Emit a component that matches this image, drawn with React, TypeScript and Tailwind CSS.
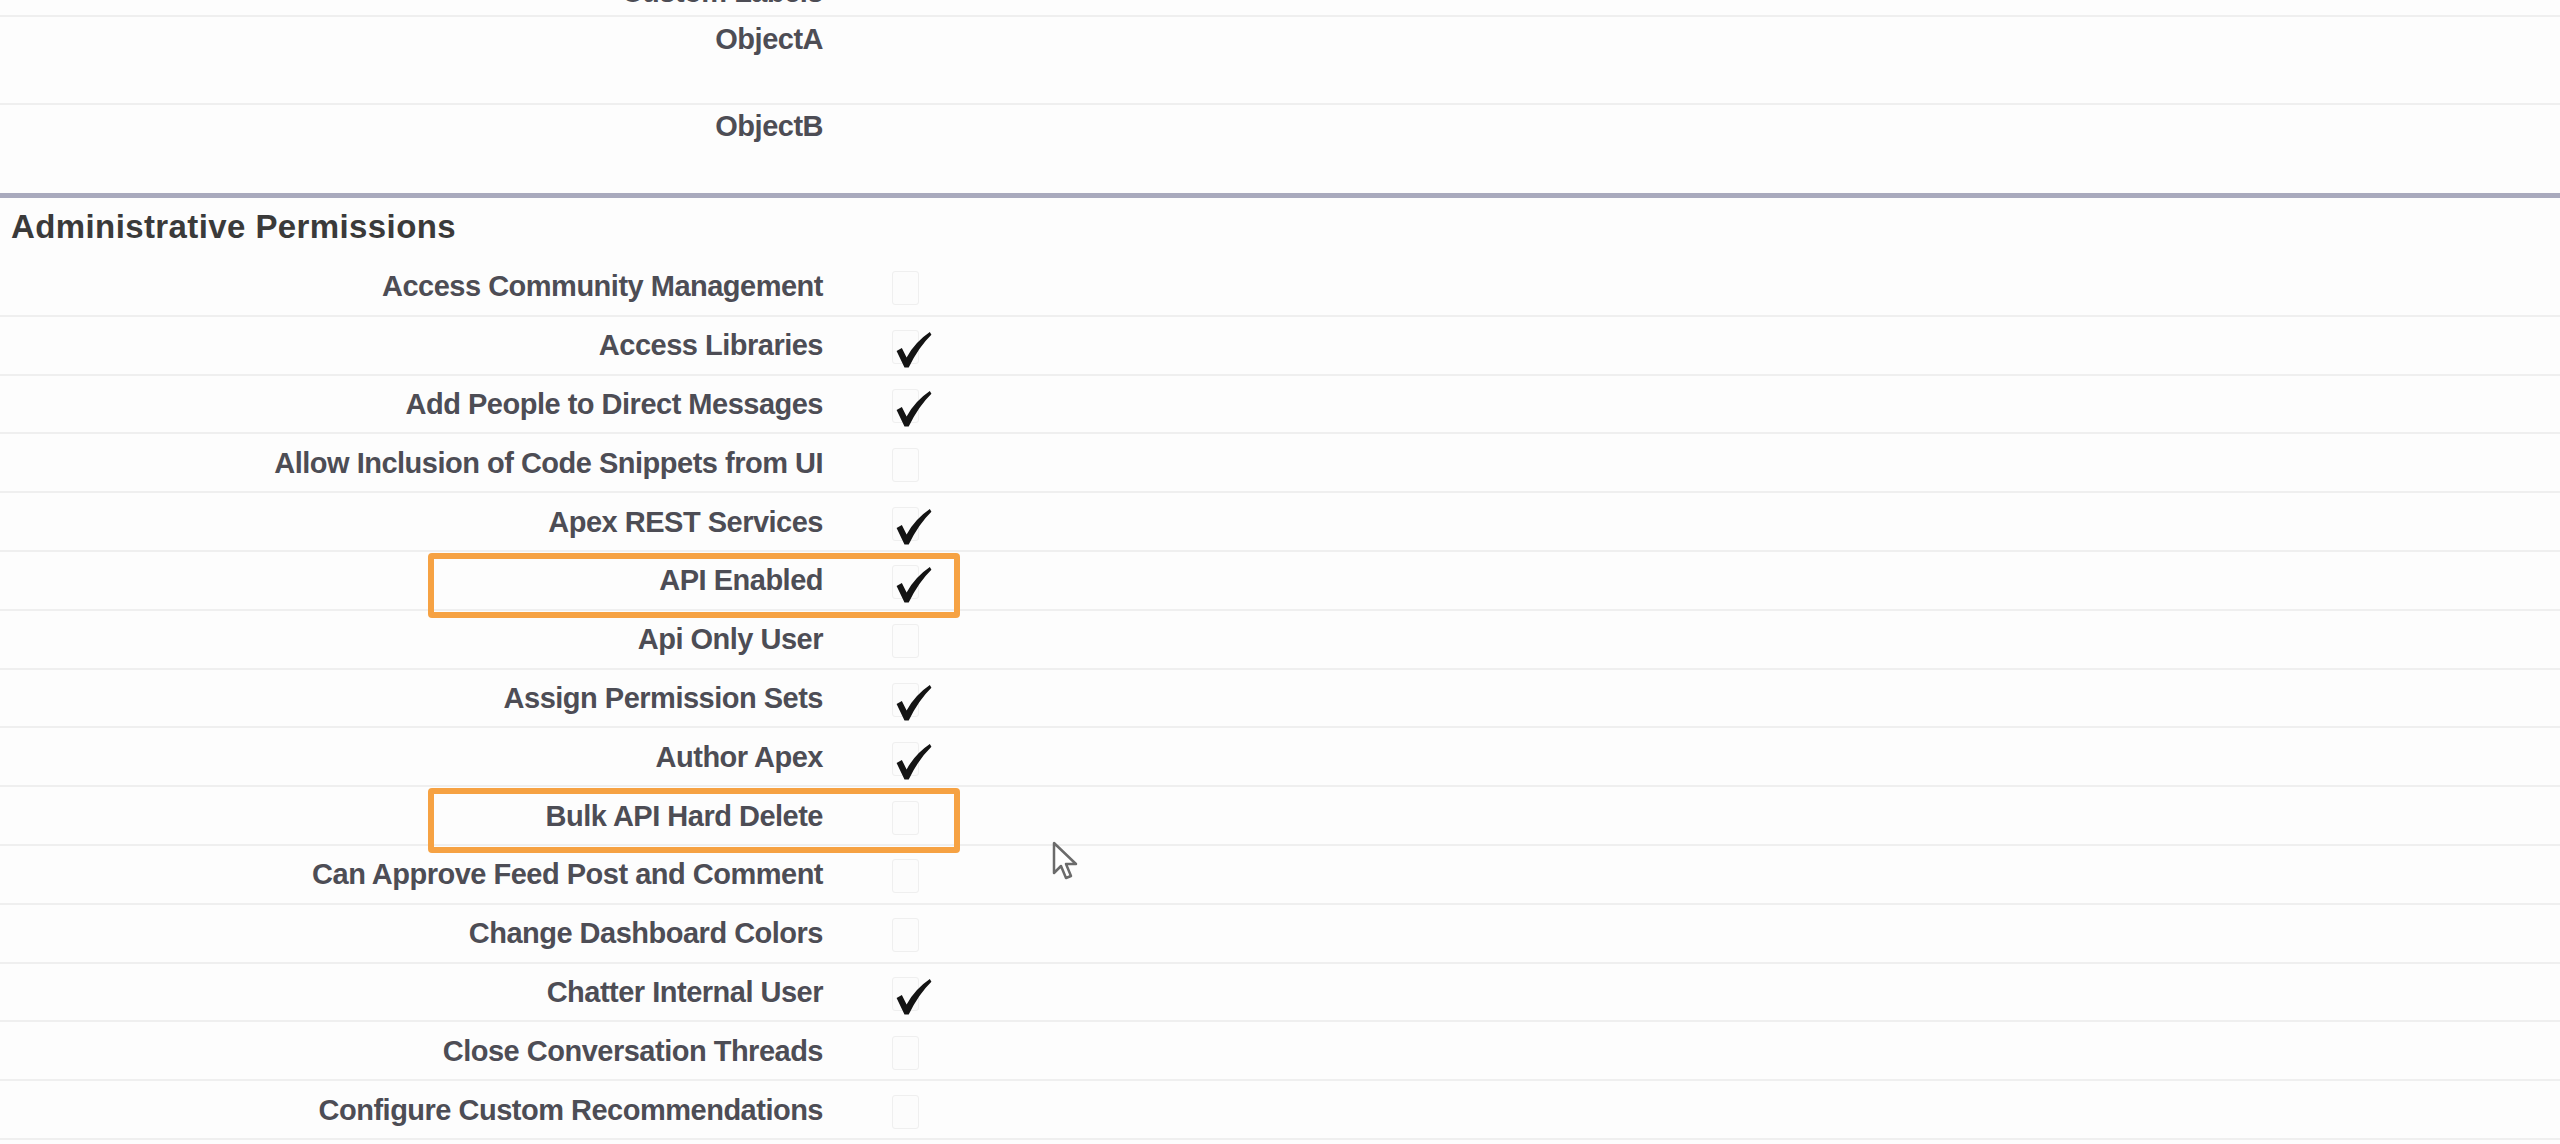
import React from 'react';

interface Permission {
  label: string;
  checked: boolean;
  highlight?: boolean;
}

const permissions: Permission[] = [
  { label: 'Access Community Management', checked: false },
  { label: 'Access Libraries', checked: true },
  { label: 'Add People to Direct Messages', checked: true },
  { label: 'Allow Inclusion of Code Snippets from UI', checked: false },
  { label: 'Apex REST Services', checked: true },
  { label: 'API Enabled', checked: true, highlight: true },
  { label: 'Api Only User', checked: false },
  { label: 'Assign Permission Sets', checked: true },
  { label: 'Author Apex', checked: true },
  { label: 'Bulk API Hard Delete', checked: false, highlight: true },
  { label: 'Can Approve Feed Post and Comment', checked: false },
  { label: 'Change Dashboard Colors', checked: false },
  { label: 'Chatter Internal User', checked: true },
  { label: 'Close Conversation Threads', checked: false },
  { label: 'Configure Custom Recommendations', checked: false },
];

const labelClass =
  "font-['Liberation_Sans',Arial,sans-serif] font-bold text-[29px] leading-[34px] tracking-[-0.5px] text-[#4d4d55] text-right";

function CheckMark() {
  return (
    <svg width="36" height="38" viewBox="0 0 34 36" className="absolute left-[3px] top-[0px]">
      <path d="M0.5 19 L5.5 16 L10 25 Q18 10.5 32 1 L33.5 3.5 Q21.5 15 12 34.5 L8 34.5 Z" fill="#141414" />
    </svg>
  );
}

function Checkbox({ checked }: { checked: boolean }) {
  return (
    <div className="relative w-[27px] h-[34px] rounded-[3px] border border-[#efefef] bg-[#fcfcfc]">
      {checked && <CheckMark />}
    </div>
  );
}

function Cursor() {
  return (
    <svg
      width="30"
      height="42"
      viewBox="0 0 30 42"
      className="absolute left-[1052px] top-[841px]"
    >
      <path
        d="M2 2 L2 32 L9 25 L14 37 L19 35 L14 23 L24 23 Z"
        fill="#ffffff"
        stroke="#6b6b6b"
        strokeWidth="2.5"
        strokeLinejoin="round"
      />
    </svg>
  );
}

export default function App() {
  return (
    <div className="relative w-[2560px] h-[1144px] bg-[#fdfdfd] overflow-hidden">
      {/* cut off row above */}
      <div className="h-[17px] overflow-hidden border-b-2 border-[#efefef]">
        <div className="w-[823px] mt-[-25px]">
          <p className={labelClass}>Custom Labels</p>
        </div>
      </div>

      {/* object rows */}
      <div className="h-[88px] border-b-2 border-[#efefef] flex">
        <div className="w-[823px] pt-[5px]">
          <p className={labelClass}>ObjectA</p>
        </div>
      </div>
      <div className="h-[88px] flex">
        <div className="w-[823px] pt-[4px]">
          <p className={labelClass}>ObjectB</p>
        </div>
      </div>

      <div className="h-[5px] bg-[#a9aabd]" />

      {/* section heading */}
      <div className="h-[60px] flex items-center pl-[11px] pb-[3px]">
        <h2 className="font-['Liberation_Sans',Arial,sans-serif] font-bold text-[33px] leading-[38px] tracking-[0.4px] text-[#3a3a3a]">
          Administrative Permissions
        </h2>
      </div>

      {/* permission rows */}
      <div className="flex flex-col">
        {permissions.map((perm) => (
          <div
            key={perm.label}
            className="relative h-[58.8px] flex items-center border-b-2 border-[#efefef]"
          >
            <div className="w-[823px]">
              <p className={labelClass}>{perm.label}</p>
            </div>
            <div className="pl-[69px] pt-[4px]">
              <Checkbox checked={perm.checked} />
            </div>
            {perm.highlight && (
              <div className="absolute left-[428px] top-[1px] w-[532px] h-[65px] rounded-[4px] border-[6px] border-[#f6a243]" />
            )}
          </div>
        ))}
      </div>

      <Cursor />
    </div>
  );
}
